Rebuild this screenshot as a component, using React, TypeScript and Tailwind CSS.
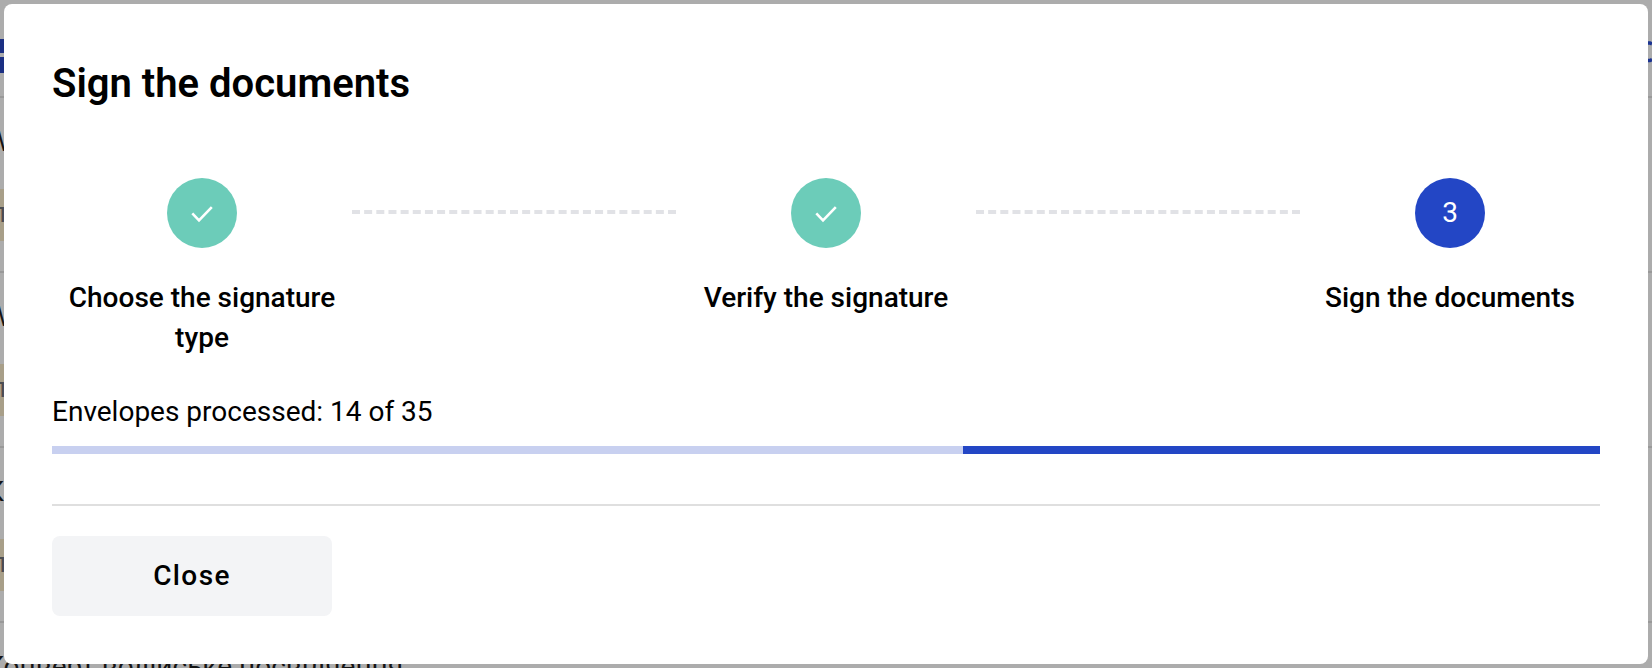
const documents = [
  { name: "W", tag: "п" },
  { name: "W", tag: "п" },
  { name: "К", tag: "п" },
  { name: "Конверт водійське посвідчення", tag: "п" },
];

const steps = [
  { label: "Choose the signature type", done: true },
  { label: "Verify the signature", done: true },
  { label: "Sign the documents", done: false },
];

function CheckIcon() {
  return (
    <svg className="h-6 w-6" viewBox="0 0 24 24" fill="none" stroke="currentColor" strokeWidth="2.6" aria-hidden="true">
      <path d="M2.3 12.4 9 19.3 21.8 6.2" />
    </svg>
  );
}

function PageBehind() {
  return (
    <div className="absolute inset-0 overflow-hidden bg-[#acacac]" aria-hidden="true">
      <div className="flex h-[98px] items-start justify-between border-b-2 border-[#999999] pt-[39px]">
        <div className="flex w-1 flex-col gap-1">
          <div className="h-[14px] bg-[#1b2f83]" />
          <div className="h-4 bg-[#1b2f83]" />
        </div>
        <svg className="h-6 w-1" viewBox="0 0 4 24" fill="none" stroke="#1b3391" strokeWidth="3.5">
          <path d="M0 4H2L4 5M0 21.5H2L4 20.5" />
        </svg>
      </div>
      {documents.map((doc, i) => (
        <div key={i} className="h-[175px] border-b-2 border-[#999999] pt-6">
          <div className="-ml-3.5">
            <p className="text-[28px] leading-10 whitespace-nowrap text-[#141414]">{doc.name}</p>
            <p className="mt-[27px] h-[52px] w-40 bg-[#a89f89] pl-1 text-[28px] leading-[48px] text-[#4b4d52]">{doc.tag}</p>
          </div>
        </div>
      ))}
    </div>
  );
}

export default function App() {
  return (
    <div className="relative min-h-screen overflow-hidden p-1 font-['Roboto',sans-serif] text-black">
      <PageBehind />
      <section role="dialog" aria-labelledby="dialog-title" className="relative rounded-lg bg-white p-12">
        <h1 id="dialog-title" className="pt-1 text-[40px] leading-[56px] font-semibold">
          Sign the documents
        </h1>
        <ol className="mt-[66px] flex items-start">
          {steps.map((step, i) => (
            <li key={step.label} className={i > 0 ? "flex flex-1 items-start" : "flex items-start"}>
              {i > 0 && <span className="mt-8 flex-1 border-t-4 border-dashed border-[#e1e2e6]" />}
              <div className="flex w-[300px] flex-col items-center gap-[30px] text-center">
                <span
                  className={
                    step.done
                      ? "flex h-[70px] w-[70px] items-center justify-center rounded-full bg-[#6cccb9] text-white"
                      : "flex h-[70px] w-[70px] items-center justify-center rounded-full bg-[#2346c5] text-[28px] text-white"
                  }
                >
                  {step.done ? <CheckIcon /> : i + 1}
                </span>
                <span className="px-4 text-[28px] leading-10 font-medium">{step.label}</span>
              </div>
            </li>
          ))}
        </ol>
        <p id="progress-label" className="mt-[34px] text-[28px] leading-10">
          Envelopes processed: 14 of 35
        </p>
        <div role="progressbar" aria-labelledby="progress-label" aria-valuemin={0} aria-valuemax={35} aria-valuenow={14} className="mt-3.5 flex h-2 justify-end bg-[#c8d0f0]">
          <div className="w-[41.15%] bg-[#2346c5]" />
        </div>
        <div className="mt-[50px] border-t-2 border-[#dfdfdf] pt-[30px]">
          <button type="button" className="h-20 w-[280px] rounded-lg bg-[#f3f4f6] text-[28px] font-medium tracking-wider">
            Close
          </button>
        </div>
      </section>
    </div>
  );
}
